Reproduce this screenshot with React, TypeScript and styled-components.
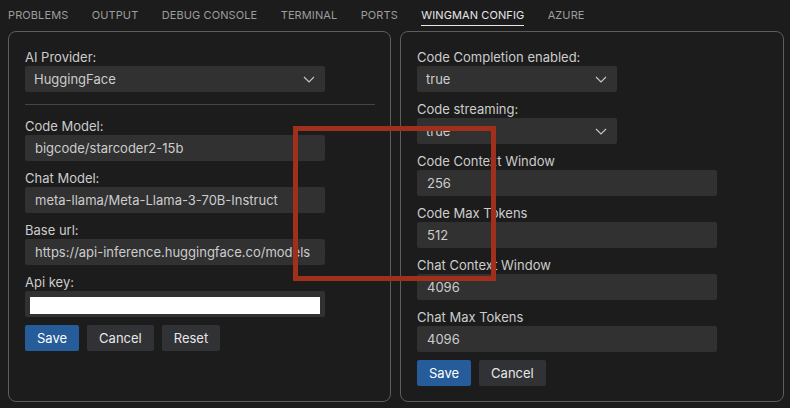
import React from "react"
import styled, { createGlobalStyle } from "styled-components"

const GlobalStyle = createGlobalStyle`
  html, body {
    margin: 0;
    padding: 0;
    background: #1c1c1c;
    font-family: Inter, "Noto Sans", sans-serif;
    color: #cccccc;
  }
`

const Page = styled.div`
  position: relative;
  width: 790px;
  height: 408px;
  overflow: hidden;
  background: #1c1c1c;
`

const TabBar = styled.div`
  display: flex;
  gap: 23.4px;
  height: 31px;
  padding-left: 8px;
  box-sizing: border-box;
`

const Tab = styled.div<{ $active?: boolean }>`
  font-size: 11px;
  letter-spacing: 0.1px;
  height: 26px;
  color: ${(p) => (p.$active ? "#e7e7e7" : "#9d9d9d")};
  border-bottom: 1px solid ${(p) => (p.$active ? "#e7e7e7" : "transparent")};
  box-sizing: border-box;
  display: flex;
  align-items: center;
  padding-top: 4px;
`

const Panels = styled.div`
  display: flex;
  gap: 9px;
  padding: 0 6px 0 8px;
`

const Panel = styled.div<{ $width: number }>`
  width: ${(p) => p.$width}px;
  height: 371px;
  box-sizing: border-box;
  border: 1px solid #5c5c5c;
  border-radius: 8px;
  padding: 16px 16px 0 16px;
  display: flex;
  flex-direction: column;
`

const Field = styled.div`
  display: flex;
  flex-direction: column;
  & + & {
    margin-top: 8px;
  }
`

const Label = styled.div`
  font-size: 13px;
  height: 18px;
  line-height: 18px;
  color: #cccccc;
`

const SelectBox = styled.div<{ $width: number }>`
  width: ${(p) => p.$width}px;
  height: 26px;
  box-sizing: border-box;
  background: #313131;
  border-radius: 2px;
  padding: 0 10px 0 9px;
  display: flex;
  align-items: center;
  justify-content: space-between;
  font-size: 13px;
  color: #cccccc;
`

const TextBox = styled.div`
  width: 300px;
  height: 26px;
  box-sizing: border-box;
  background: #313131;
  border-radius: 2px;
  padding: 0 10px;
  display: flex;
  align-items: center;
  font-size: 13px;
  color: #cccccc;
  white-space: nowrap;
  overflow: hidden;
`

const SecretBox = styled.div`
  width: 300px;
  height: 26px;
  box-sizing: border-box;
  background: #313131;
  border-radius: 2px;
  padding: 6px 5px 3px 5px;
`

const SecretInner = styled.div`
  height: 17px;
  background: #ffffff;
`

const Divider = styled.div`
  height: 1px;
  width: 350px;
  background: #454545;
  margin: 12px 0 12px 0;
`

const Buttons = styled.div`
  display: flex;
  gap: 8px;
  margin-top: 8px;
`

const Button = styled.div<{ $primary?: boolean }>`
  height: 26px;
  padding: 0 12px;
  box-sizing: border-box;
  border-radius: 2px;
  display: flex;
  align-items: center;
  font-size: 13px;
  color: ${(p) => (p.$primary ? "#ffffff" : "#e6e6e6")};
  background: ${(p) => (p.$primary ? "#255c99" : "#313236")};
`

const Highlight = styled.div`
  position: absolute;
  left: 293px;
  top: 126px;
  width: 203px;
  height: 155px;
  box-sizing: border-box;
  border: 5px solid #a02f1c;
  pointer-events: none;
`

const Chevron = () => (
  <svg width="12" height="7" viewBox="0 0 12 7" fill="none">
    <path d="M1 1l5 5 5-5" stroke="#c5c5c5" strokeWidth="1.2" />
  </svg>
)

const Select = ({ value, width }: { value: string; width: number }) => (
  <SelectBox $width={width}>
    <span>{value}</span>
    <Chevron />
  </SelectBox>
)

const tabs = ["PROBLEMS", "OUTPUT", "DEBUG CONSOLE", "TERMINAL", "PORTS", "WINGMAN CONFIG", "AZURE"]

const App = () => (
  <Page>
    <GlobalStyle />
    <TabBar>
      {tabs.map((t) => (
        <Tab key={t} $active={t === "WINGMAN CONFIG"}>{t}</Tab>
      ))}
    </TabBar>
    <Panels>
      <Panel $width={383}>
        <Field>
          <Label>AI Provider:</Label>
          <Select value="HuggingFace" width={300} />
        </Field>
        <Divider />
        <Field>
          <Label>Code Model:</Label>
          <TextBox>bigcode/starcoder2-15b</TextBox>
        </Field>
        <Field>
          <Label>Chat Model:</Label>
          <TextBox>meta-llama/Meta-Llama-3-70B-Instruct</TextBox>
        </Field>
        <Field>
          <Label>Base url:</Label>
          <TextBox>https://api-inference.huggingface.co/models</TextBox>
        </Field>
        <Field>
          <Label>Api key:</Label>
          <SecretBox>
            <SecretInner />
          </SecretBox>
        </Field>
        <Buttons>
          <Button $primary>Save</Button>
          <Button>Cancel</Button>
          <Button>Reset</Button>
        </Buttons>
      </Panel>
      <Panel $width={384}>
        <Field>
          <Label>Code Completion enabled:</Label>
          <Select value="true" width={200} />
        </Field>
        <Field>
          <Label>Code streaming:</Label>
          <Select value="true" width={200} />
        </Field>
        <Field>
          <Label>Code Context Window</Label>
          <TextBox>256</TextBox>
        </Field>
        <Field>
          <Label>Code Max Tokens</Label>
          <TextBox>512</TextBox>
        </Field>
        <Field>
          <Label>Chat Context Window</Label>
          <TextBox>4096</TextBox>
        </Field>
        <Field>
          <Label>Chat Max Tokens</Label>
          <TextBox>4096</TextBox>
        </Field>
        <Buttons>
          <Button $primary>Save</Button>
          <Button>Cancel</Button>
        </Buttons>
      </Panel>
    </Panels>
    <Highlight />
  </Page>
)

export default App
